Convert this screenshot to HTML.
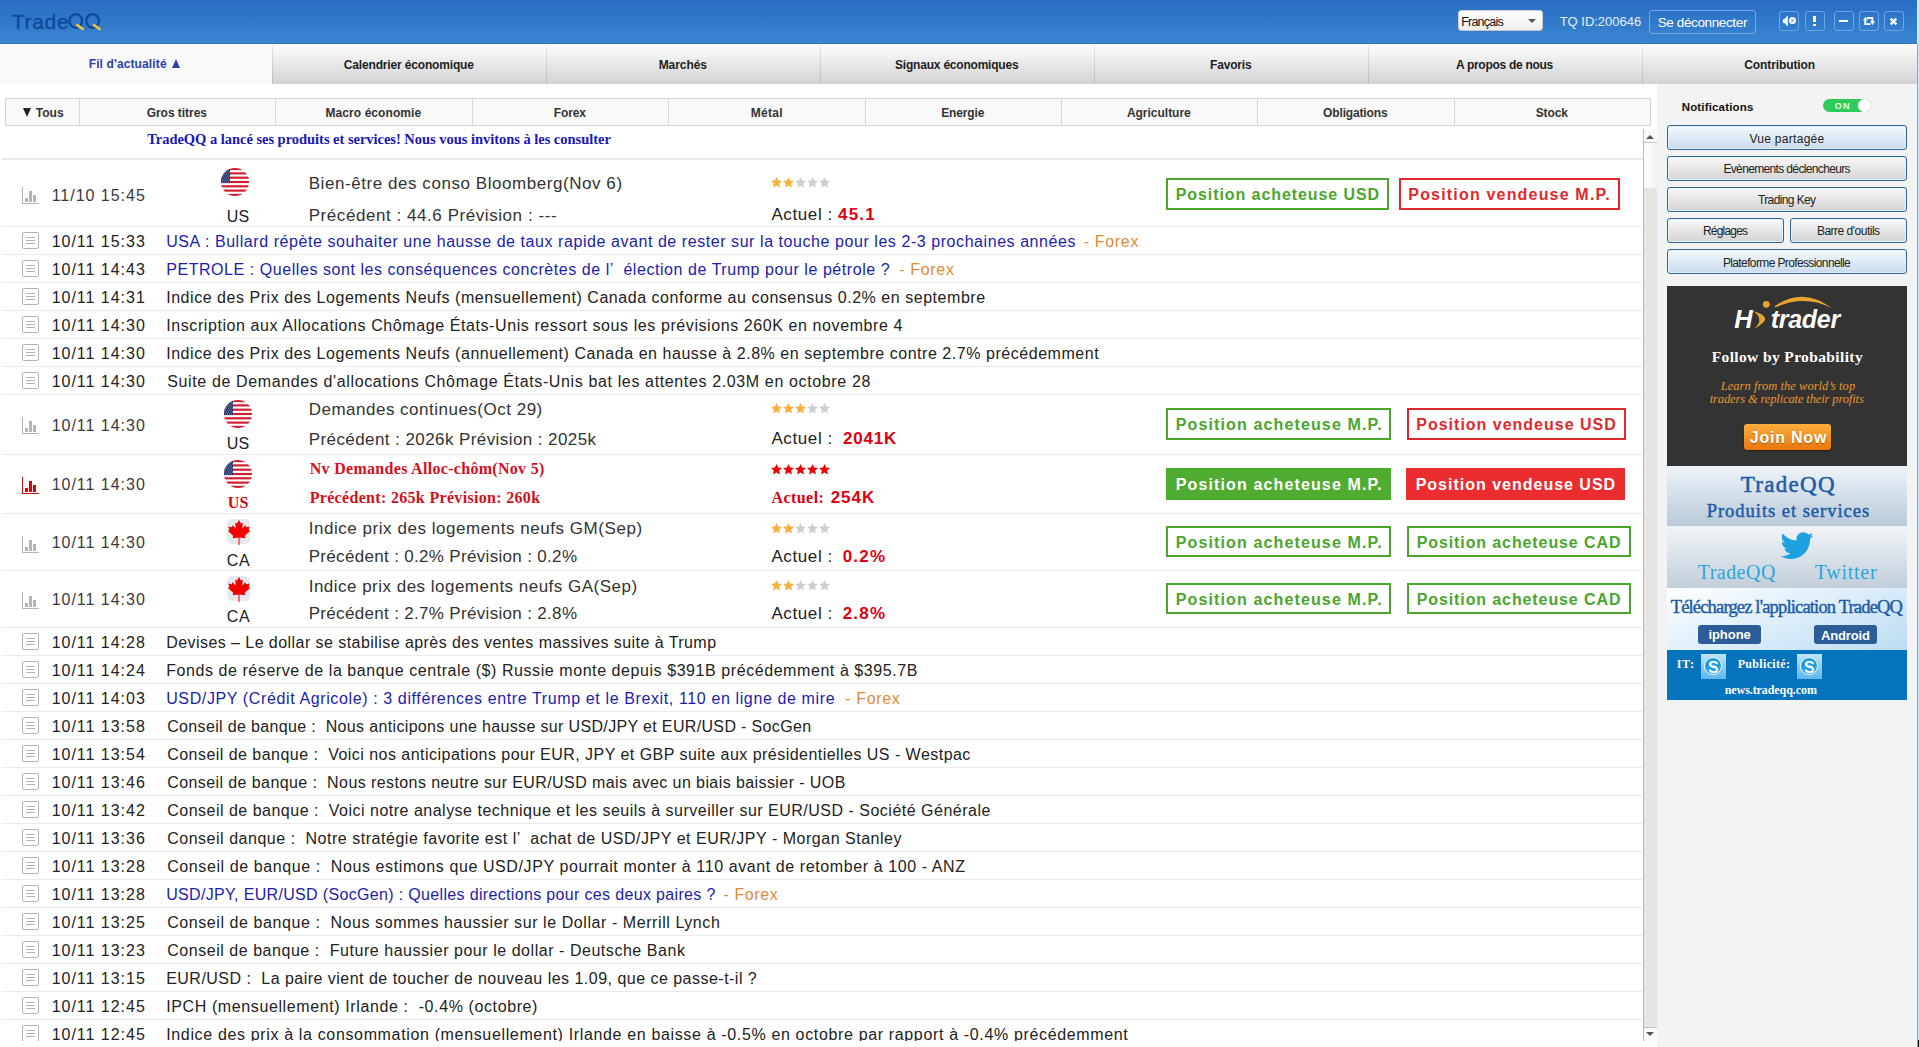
<!DOCTYPE html><html><head><meta charset="utf-8"><style>html,body{margin:0;padding:0;}body{width:1919px;height:1047px;overflow:hidden;position:relative;background:#fff;font-family:'Liberation Sans',sans-serif}</style></head><body><div style="position:absolute;left:0;top:0;width:1917px;height:44px;background:linear-gradient(#286dc3,#3a86d0);"></div>
<div style="position:absolute;left:0;top:43px;width:1917px;height:1px;background:#366eae;"></div>
<div style="position:absolute;left:1917px;top:0;width:2px;height:1047px;background:#dae6f3;"></div>
<svg style="position:absolute;left:0;top:0" width="110" height="40" viewBox="0 0 110 40">
<ellipse cx="75.8" cy="20.9" rx="6.3" ry="6.8" fill="none" stroke="#0f4a9a" stroke-width="2.4"/>
<ellipse cx="92.6" cy="20.9" rx="6.3" ry="6.8" fill="none" stroke="#0f4a9a" stroke-width="2.4"/>
<path d="M77.2 25.1 L82.8 29" stroke="#efc445" stroke-width="2.6" stroke-linecap="round"/>
<path d="M94 25.1 L99.6 29" stroke="#efc445" stroke-width="2.6" stroke-linecap="round"/>
</svg>
<div style="position:absolute;left:1458px;top:10px;width:85px;height:21px;border-radius:4px;background:linear-gradient(#ffffff,#eeedeb);box-shadow:0 0 0 1px rgba(120,120,120,.35) inset"></div>
<div style="position:absolute;left:1528px;top:19px;width:0;height:0;border-left:4px solid transparent;border-right:4px solid transparent;border-top:4px solid #555"></div>
<div style="position:absolute;left:1649px;top:10px;width:105px;height:22px;border:1px solid #74aae6;border-radius:3px;"></div>
<div style="position:absolute;left:1779px;top:11px;width:18px;height:18px;border:1px solid #6aa6ea;border-radius:3px;"></div>
<div style="position:absolute;left:1805px;top:11px;width:18px;height:18px;border:1px solid #6aa6ea;border-radius:3px;"></div>
<div style="position:absolute;left:1834px;top:11px;width:18px;height:18px;border:1px solid #6aa6ea;border-radius:3px;"></div>
<div style="position:absolute;left:1859px;top:11px;width:18px;height:18px;border:1px solid #6aa6ea;border-radius:3px;"></div>
<div style="position:absolute;left:1884px;top:11px;width:18px;height:18px;border:1px solid #6aa6ea;border-radius:3px;"></div>
<svg style="position:absolute;left:1779px;top:11px" width="20" height="20" viewBox="0 0 20 20">
<path d="M3.9 8.2 L5.3 8.2 L8.8 4.3 L8.8 15.6 L5.3 12 L3.9 12 Z" fill="#fff"/>
<circle cx="13.5" cy="9.6" r="3.5" fill="#fff"/>
<path d="M12.4 8.5 L14.6 10.7 M14.6 8.5 L12.4 10.7" stroke="#2a6cc0" stroke-width="0.9"/></svg>
<div style="position:absolute;left:1813px;top:16px;width:3px;height:6px;background:#fff"></div><div style="position:absolute;left:1813px;top:24px;width:3px;height:2px;background:#fff"></div>
<div style="position:absolute;left:1839px;top:20px;width:9px;height:2px;background:#fff"></div>
<svg style="position:absolute;left:1859px;top:11px" width="20" height="20" viewBox="0 0 20 20">
<path d="M6.4 5.7 L8.9 9.5 L7.2 9.5 L7.2 12.2 L11.6 12.2 L11.6 13.9 L5.3 13.9 L5.3 9.5 L3.9 9.5 Z" fill="#fff"/>
<path d="M8 6.1 L14.3 6.1 L14.3 10.3 L16 10.3 L13.5 13.9 L11.2 10.3 L12.4 10.3 L12.4 8 L8 8 Z" fill="#fff"/></svg>
<svg style="position:absolute;left:1884px;top:11px" width="20" height="20" viewBox="0 0 20 20">
<path d="M6.7 7.7 L12.3 13.3 M12.3 7.7 L6.7 13.3" stroke="#fff" stroke-width="2.4"/></svg>
<div style="position:absolute;left:0;top:44px;width:272px;height:40px;background:#f9f9f9"></div>
<div style="position:absolute;left:272px;top:44px;width:274px;height:40px;background:linear-gradient(#fefefe 0%,#f3f3f3 25%,#d2d2d5 100%);"></div>
<div style="position:absolute;left:272px;top:45px;width:1px;height:39px;background:linear-gradient(#e8e8e8,#bcbcc0)"></div>
<div style="position:absolute;left:546px;top:44px;width:274px;height:40px;background:linear-gradient(#fefefe 0%,#f3f3f3 25%,#d2d2d5 100%);"></div>
<div style="position:absolute;left:546px;top:45px;width:1px;height:39px;background:linear-gradient(#e8e8e8,#bcbcc0)"></div>
<div style="position:absolute;left:820px;top:44px;width:274px;height:40px;background:linear-gradient(#fefefe 0%,#f3f3f3 25%,#d2d2d5 100%);"></div>
<div style="position:absolute;left:820px;top:45px;width:1px;height:39px;background:linear-gradient(#e8e8e8,#bcbcc0)"></div>
<div style="position:absolute;left:1094px;top:44px;width:274px;height:40px;background:linear-gradient(#fefefe 0%,#f3f3f3 25%,#d2d2d5 100%);"></div>
<div style="position:absolute;left:1094px;top:45px;width:1px;height:39px;background:linear-gradient(#e8e8e8,#bcbcc0)"></div>
<div style="position:absolute;left:1368px;top:44px;width:274px;height:40px;background:linear-gradient(#fefefe 0%,#f3f3f3 25%,#d2d2d5 100%);"></div>
<div style="position:absolute;left:1368px;top:45px;width:1px;height:39px;background:linear-gradient(#e8e8e8,#bcbcc0)"></div>
<div style="position:absolute;left:1642px;top:44px;width:275px;height:40px;background:linear-gradient(#fefefe 0%,#f3f3f3 25%,#d2d2d5 100%);"></div>
<div style="position:absolute;left:1642px;top:45px;width:1px;height:39px;background:linear-gradient(#e8e8e8,#bcbcc0)"></div>
<div style="position:absolute;left:172px;top:59px;width:0;height:0;border-left:4px solid transparent;border-right:4px solid transparent;border-bottom:9px solid #2b3fb3"></div>
<div style="position:absolute;left:5px;top:98px;width:1644px;height:26px;background:#f9f9f9;border:1px solid #d4d4d4"></div>
<div style="position:absolute;left:79px;top:99px;width:1px;height:26px;background:#d8d8d8"></div>
<div style="position:absolute;left:275px;top:99px;width:1px;height:26px;background:#d8d8d8"></div>
<div style="position:absolute;left:472px;top:99px;width:1px;height:26px;background:#d8d8d8"></div>
<div style="position:absolute;left:668px;top:99px;width:1px;height:26px;background:#d8d8d8"></div>
<div style="position:absolute;left:865px;top:99px;width:1px;height:26px;background:#d8d8d8"></div>
<div style="position:absolute;left:1061px;top:99px;width:1px;height:26px;background:#d8d8d8"></div>
<div style="position:absolute;left:1257px;top:99px;width:1px;height:26px;background:#d8d8d8"></div>
<div style="position:absolute;left:1454px;top:99px;width:1px;height:26px;background:#d8d8d8"></div>
<div style="position:absolute;left:23px;top:108px;width:0;height:0;border-left:4px solid transparent;border-right:4px solid transparent;border-top:9px solid #222"></div>
<div style="position:absolute;left:1657px;top:84px;width:260px;height:963px;background:#f3f3f3"></div>
<div style="position:absolute;left:2px;top:158px;width:1641px;height:2px;background:#ebebeb"></div>
<div style="position:absolute;left:22px;top:187px;width:1px;height:17px;background:#b4b4b4"></div><div style="position:absolute;left:22px;top:203px;width:17px;height:1px;background:#b4b4b4"></div><div style="position:absolute;left:25px;top:198px;width:3px;height:4px;background:#b4b4b4"></div><div style="position:absolute;left:29px;top:191px;width:3px;height:11px;background:#b4b4b4"></div><div style="position:absolute;left:33px;top:195px;width:3px;height:7px;background:#b4b4b4"></div>
<svg style="position:absolute;left:221px;top:168px" width="28" height="28" viewBox="0 0 28 28"><defs><clipPath id="c235182"><circle cx="14" cy="14" r="14"/></clipPath></defs><g clip-path="url(#c235182)"><rect width="28" height="28" fill="#fff"/><rect x="0" y="0.00" width="28" height="2.15" fill="#cf1f2e"/><rect x="0" y="4.31" width="28" height="2.15" fill="#cf1f2e"/><rect x="0" y="8.62" width="28" height="2.15" fill="#cf1f2e"/><rect x="0" y="12.92" width="28" height="2.15" fill="#cf1f2e"/><rect x="0" y="17.23" width="28" height="2.15" fill="#cf1f2e"/><rect x="0" y="21.54" width="28" height="2.15" fill="#cf1f2e"/><rect x="0" y="25.85" width="28" height="2.15" fill="#cf1f2e"/><rect x="0" y="0" width="9" height="15.1" fill="#27386f"/><circle cx="1.5" cy="2" r="0.45" fill="#dfe4f0"/><circle cx="3.5" cy="2" r="0.45" fill="#dfe4f0"/><circle cx="5.5" cy="2" r="0.45" fill="#dfe4f0"/><circle cx="7.5" cy="2" r="0.45" fill="#dfe4f0"/><circle cx="2.5" cy="4" r="0.45" fill="#dfe4f0"/><circle cx="4.5" cy="4" r="0.45" fill="#dfe4f0"/><circle cx="6.5" cy="4" r="0.45" fill="#dfe4f0"/><circle cx="8.5" cy="4" r="0.45" fill="#dfe4f0"/><circle cx="1.5" cy="6" r="0.45" fill="#dfe4f0"/><circle cx="3.5" cy="6" r="0.45" fill="#dfe4f0"/><circle cx="5.5" cy="6" r="0.45" fill="#dfe4f0"/><circle cx="7.5" cy="6" r="0.45" fill="#dfe4f0"/><circle cx="2.5" cy="8" r="0.45" fill="#dfe4f0"/><circle cx="4.5" cy="8" r="0.45" fill="#dfe4f0"/><circle cx="6.5" cy="8" r="0.45" fill="#dfe4f0"/><circle cx="8.5" cy="8" r="0.45" fill="#dfe4f0"/><circle cx="1.5" cy="10" r="0.45" fill="#dfe4f0"/><circle cx="3.5" cy="10" r="0.45" fill="#dfe4f0"/><circle cx="5.5" cy="10" r="0.45" fill="#dfe4f0"/><circle cx="7.5" cy="10" r="0.45" fill="#dfe4f0"/><circle cx="2.5" cy="12" r="0.45" fill="#dfe4f0"/><circle cx="4.5" cy="12" r="0.45" fill="#dfe4f0"/><circle cx="6.5" cy="12" r="0.45" fill="#dfe4f0"/><circle cx="8.5" cy="12" r="0.45" fill="#dfe4f0"/><circle cx="1.5" cy="14" r="0.45" fill="#dfe4f0"/><circle cx="3.5" cy="14" r="0.45" fill="#dfe4f0"/><circle cx="5.5" cy="14" r="0.45" fill="#dfe4f0"/><circle cx="7.5" cy="14" r="0.45" fill="#dfe4f0"/></g></svg>
<svg style="position:absolute;left:771px;top:177px" width="60" height="11" viewBox="0 0 60 11"><path transform="translate(0,0)" d="M5.5 0 L7.1 3.6 L11 4 L8.1 6.6 L8.9 10.5 L5.5 8.5 L2.1 10.5 L2.9 6.6 L0 4 L3.9 3.6 Z" fill="#f7b03c"/><path transform="translate(12,0)" d="M5.5 0 L7.1 3.6 L11 4 L8.1 6.6 L8.9 10.5 L5.5 8.5 L2.1 10.5 L2.9 6.6 L0 4 L3.9 3.6 Z" fill="#f7b03c"/><path transform="translate(24,0)" d="M5.5 0 L7.1 3.6 L11 4 L8.1 6.6 L8.9 10.5 L5.5 8.5 L2.1 10.5 L2.9 6.6 L0 4 L3.9 3.6 Z" fill="#cfcfcf"/><path transform="translate(36,0)" d="M5.5 0 L7.1 3.6 L11 4 L8.1 6.6 L8.9 10.5 L5.5 8.5 L2.1 10.5 L2.9 6.6 L0 4 L3.9 3.6 Z" fill="#cfcfcf"/><path transform="translate(48,0)" d="M5.5 0 L7.1 3.6 L11 4 L8.1 6.6 L8.9 10.5 L5.5 8.5 L2.1 10.5 L2.9 6.6 L0 4 L3.9 3.6 Z" fill="#cfcfcf"/></svg>
<div style="position:absolute;left:1166px;top:178px;width:219px;height:28px;border:2px solid #4aa62e"></div>
<div style="position:absolute;left:1399px;top:178px;width:217px;height:28px;border:2px solid #e0282e"></div>
<div style="position:absolute;left:2px;top:226px;width:1641px;height:1px;background:#ebebeb"></div>
<div style="position:absolute;left:22px;top:417px;width:1px;height:17px;background:#b4b4b4"></div><div style="position:absolute;left:22px;top:433px;width:17px;height:1px;background:#b4b4b4"></div><div style="position:absolute;left:25px;top:428px;width:3px;height:4px;background:#b4b4b4"></div><div style="position:absolute;left:29px;top:421px;width:3px;height:11px;background:#b4b4b4"></div><div style="position:absolute;left:33px;top:425px;width:3px;height:7px;background:#b4b4b4"></div>
<svg style="position:absolute;left:224px;top:400px" width="28" height="28" viewBox="0 0 28 28"><defs><clipPath id="c238414"><circle cx="14" cy="14" r="14"/></clipPath></defs><g clip-path="url(#c238414)"><rect width="28" height="28" fill="#fff"/><rect x="0" y="0.00" width="28" height="2.15" fill="#cf1f2e"/><rect x="0" y="4.31" width="28" height="2.15" fill="#cf1f2e"/><rect x="0" y="8.62" width="28" height="2.15" fill="#cf1f2e"/><rect x="0" y="12.92" width="28" height="2.15" fill="#cf1f2e"/><rect x="0" y="17.23" width="28" height="2.15" fill="#cf1f2e"/><rect x="0" y="21.54" width="28" height="2.15" fill="#cf1f2e"/><rect x="0" y="25.85" width="28" height="2.15" fill="#cf1f2e"/><rect x="0" y="0" width="9" height="15.1" fill="#27386f"/><circle cx="1.5" cy="2" r="0.45" fill="#dfe4f0"/><circle cx="3.5" cy="2" r="0.45" fill="#dfe4f0"/><circle cx="5.5" cy="2" r="0.45" fill="#dfe4f0"/><circle cx="7.5" cy="2" r="0.45" fill="#dfe4f0"/><circle cx="2.5" cy="4" r="0.45" fill="#dfe4f0"/><circle cx="4.5" cy="4" r="0.45" fill="#dfe4f0"/><circle cx="6.5" cy="4" r="0.45" fill="#dfe4f0"/><circle cx="8.5" cy="4" r="0.45" fill="#dfe4f0"/><circle cx="1.5" cy="6" r="0.45" fill="#dfe4f0"/><circle cx="3.5" cy="6" r="0.45" fill="#dfe4f0"/><circle cx="5.5" cy="6" r="0.45" fill="#dfe4f0"/><circle cx="7.5" cy="6" r="0.45" fill="#dfe4f0"/><circle cx="2.5" cy="8" r="0.45" fill="#dfe4f0"/><circle cx="4.5" cy="8" r="0.45" fill="#dfe4f0"/><circle cx="6.5" cy="8" r="0.45" fill="#dfe4f0"/><circle cx="8.5" cy="8" r="0.45" fill="#dfe4f0"/><circle cx="1.5" cy="10" r="0.45" fill="#dfe4f0"/><circle cx="3.5" cy="10" r="0.45" fill="#dfe4f0"/><circle cx="5.5" cy="10" r="0.45" fill="#dfe4f0"/><circle cx="7.5" cy="10" r="0.45" fill="#dfe4f0"/><circle cx="2.5" cy="12" r="0.45" fill="#dfe4f0"/><circle cx="4.5" cy="12" r="0.45" fill="#dfe4f0"/><circle cx="6.5" cy="12" r="0.45" fill="#dfe4f0"/><circle cx="8.5" cy="12" r="0.45" fill="#dfe4f0"/><circle cx="1.5" cy="14" r="0.45" fill="#dfe4f0"/><circle cx="3.5" cy="14" r="0.45" fill="#dfe4f0"/><circle cx="5.5" cy="14" r="0.45" fill="#dfe4f0"/><circle cx="7.5" cy="14" r="0.45" fill="#dfe4f0"/></g></svg>
<svg style="position:absolute;left:771px;top:403px" width="60" height="11" viewBox="0 0 60 11"><path transform="translate(0,0)" d="M5.5 0 L7.1 3.6 L11 4 L8.1 6.6 L8.9 10.5 L5.5 8.5 L2.1 10.5 L2.9 6.6 L0 4 L3.9 3.6 Z" fill="#f7b03c"/><path transform="translate(12,0)" d="M5.5 0 L7.1 3.6 L11 4 L8.1 6.6 L8.9 10.5 L5.5 8.5 L2.1 10.5 L2.9 6.6 L0 4 L3.9 3.6 Z" fill="#f7b03c"/><path transform="translate(24,0)" d="M5.5 0 L7.1 3.6 L11 4 L8.1 6.6 L8.9 10.5 L5.5 8.5 L2.1 10.5 L2.9 6.6 L0 4 L3.9 3.6 Z" fill="#f7b03c"/><path transform="translate(36,0)" d="M5.5 0 L7.1 3.6 L11 4 L8.1 6.6 L8.9 10.5 L5.5 8.5 L2.1 10.5 L2.9 6.6 L0 4 L3.9 3.6 Z" fill="#cfcfcf"/><path transform="translate(48,0)" d="M5.5 0 L7.1 3.6 L11 4 L8.1 6.6 L8.9 10.5 L5.5 8.5 L2.1 10.5 L2.9 6.6 L0 4 L3.9 3.6 Z" fill="#cfcfcf"/></svg>
<div style="position:absolute;left:1166px;top:408px;width:221px;height:28px;border:2px solid #4aa62e"></div>
<div style="position:absolute;left:1407px;top:408px;width:215px;height:28px;border:2px solid #e0282e"></div>
<div style="position:absolute;left:2px;top:454px;width:1641px;height:1px;background:#ebebeb"></div>
<div style="position:absolute;left:22px;top:477px;width:1px;height:17px;background:#c81010"></div><div style="position:absolute;left:22px;top:493px;width:17px;height:1px;background:#c81010"></div><div style="position:absolute;left:25px;top:488px;width:3px;height:4px;background:#e00000"></div><div style="position:absolute;left:29px;top:481px;width:3px;height:11px;background:#e00000"></div><div style="position:absolute;left:33px;top:485px;width:3px;height:7px;background:#e00000"></div>
<svg style="position:absolute;left:224px;top:460px" width="28" height="28" viewBox="0 0 28 28"><defs><clipPath id="c238474"><circle cx="14" cy="14" r="14"/></clipPath></defs><g clip-path="url(#c238474)"><rect width="28" height="28" fill="#fff"/><rect x="0" y="0.00" width="28" height="2.15" fill="#cf1f2e"/><rect x="0" y="4.31" width="28" height="2.15" fill="#cf1f2e"/><rect x="0" y="8.62" width="28" height="2.15" fill="#cf1f2e"/><rect x="0" y="12.92" width="28" height="2.15" fill="#cf1f2e"/><rect x="0" y="17.23" width="28" height="2.15" fill="#cf1f2e"/><rect x="0" y="21.54" width="28" height="2.15" fill="#cf1f2e"/><rect x="0" y="25.85" width="28" height="2.15" fill="#cf1f2e"/><rect x="0" y="0" width="9" height="15.1" fill="#27386f"/><circle cx="1.5" cy="2" r="0.45" fill="#dfe4f0"/><circle cx="3.5" cy="2" r="0.45" fill="#dfe4f0"/><circle cx="5.5" cy="2" r="0.45" fill="#dfe4f0"/><circle cx="7.5" cy="2" r="0.45" fill="#dfe4f0"/><circle cx="2.5" cy="4" r="0.45" fill="#dfe4f0"/><circle cx="4.5" cy="4" r="0.45" fill="#dfe4f0"/><circle cx="6.5" cy="4" r="0.45" fill="#dfe4f0"/><circle cx="8.5" cy="4" r="0.45" fill="#dfe4f0"/><circle cx="1.5" cy="6" r="0.45" fill="#dfe4f0"/><circle cx="3.5" cy="6" r="0.45" fill="#dfe4f0"/><circle cx="5.5" cy="6" r="0.45" fill="#dfe4f0"/><circle cx="7.5" cy="6" r="0.45" fill="#dfe4f0"/><circle cx="2.5" cy="8" r="0.45" fill="#dfe4f0"/><circle cx="4.5" cy="8" r="0.45" fill="#dfe4f0"/><circle cx="6.5" cy="8" r="0.45" fill="#dfe4f0"/><circle cx="8.5" cy="8" r="0.45" fill="#dfe4f0"/><circle cx="1.5" cy="10" r="0.45" fill="#dfe4f0"/><circle cx="3.5" cy="10" r="0.45" fill="#dfe4f0"/><circle cx="5.5" cy="10" r="0.45" fill="#dfe4f0"/><circle cx="7.5" cy="10" r="0.45" fill="#dfe4f0"/><circle cx="2.5" cy="12" r="0.45" fill="#dfe4f0"/><circle cx="4.5" cy="12" r="0.45" fill="#dfe4f0"/><circle cx="6.5" cy="12" r="0.45" fill="#dfe4f0"/><circle cx="8.5" cy="12" r="0.45" fill="#dfe4f0"/><circle cx="1.5" cy="14" r="0.45" fill="#dfe4f0"/><circle cx="3.5" cy="14" r="0.45" fill="#dfe4f0"/><circle cx="5.5" cy="14" r="0.45" fill="#dfe4f0"/><circle cx="7.5" cy="14" r="0.45" fill="#dfe4f0"/></g></svg>
<svg style="position:absolute;left:771px;top:464px" width="60" height="11" viewBox="0 0 60 11"><path transform="translate(0,0)" d="M5.5 0 L7.1 3.6 L11 4 L8.1 6.6 L8.9 10.5 L5.5 8.5 L2.1 10.5 L2.9 6.6 L0 4 L3.9 3.6 Z" fill="#ee0000"/><path transform="translate(12,0)" d="M5.5 0 L7.1 3.6 L11 4 L8.1 6.6 L8.9 10.5 L5.5 8.5 L2.1 10.5 L2.9 6.6 L0 4 L3.9 3.6 Z" fill="#ee0000"/><path transform="translate(24,0)" d="M5.5 0 L7.1 3.6 L11 4 L8.1 6.6 L8.9 10.5 L5.5 8.5 L2.1 10.5 L2.9 6.6 L0 4 L3.9 3.6 Z" fill="#ee0000"/><path transform="translate(36,0)" d="M5.5 0 L7.1 3.6 L11 4 L8.1 6.6 L8.9 10.5 L5.5 8.5 L2.1 10.5 L2.9 6.6 L0 4 L3.9 3.6 Z" fill="#ee0000"/><path transform="translate(48,0)" d="M5.5 0 L7.1 3.6 L11 4 L8.1 6.6 L8.9 10.5 L5.5 8.5 L2.1 10.5 L2.9 6.6 L0 4 L3.9 3.6 Z" fill="#ee0000"/></svg>
<div style="position:absolute;left:1166px;top:468px;width:225px;height:32px;background:#4fac30"></div>
<div style="position:absolute;left:1406px;top:468px;width:219px;height:32px;background:#ec2d30"></div>
<div style="position:absolute;left:2px;top:513px;width:1641px;height:1px;background:#ebebeb"></div>
<div style="position:absolute;left:22px;top:536px;width:1px;height:17px;background:#b4b4b4"></div><div style="position:absolute;left:22px;top:552px;width:17px;height:1px;background:#b4b4b4"></div><div style="position:absolute;left:25px;top:547px;width:3px;height:4px;background:#b4b4b4"></div><div style="position:absolute;left:29px;top:540px;width:3px;height:11px;background:#b4b4b4"></div><div style="position:absolute;left:33px;top:544px;width:3px;height:7px;background:#b4b4b4"></div>
<div style="position:absolute;left:227px;top:519px;width:23px;height:25px;border-radius:5px;background:#e6e8ec"></div><svg style="position:absolute;left:227.5px;top:519.5px" width="22" height="25" viewBox="0 0 22 25"><path d="M11 0 L13 3.6 L14.8 2.8 L14.2 8.5 L17.5 5.2 L18.2 7.2 L21.6 6.6 L20.6 10 L22 11 L16.6 16 L17.4 18.3 L11.5 17.4 L11.5 25 L10.5 25 L10.5 17.4 L4.6 18.3 L5.4 16 L0 11 L1.4 10 L0.4 6.6 L3.8 7.2 L4.5 5.2 L7.8 8.5 L7.2 2.8 L9 3.6 Z" fill="#f20000"/></svg>
<svg style="position:absolute;left:771px;top:523px" width="60" height="11" viewBox="0 0 60 11"><path transform="translate(0,0)" d="M5.5 0 L7.1 3.6 L11 4 L8.1 6.6 L8.9 10.5 L5.5 8.5 L2.1 10.5 L2.9 6.6 L0 4 L3.9 3.6 Z" fill="#f7b03c"/><path transform="translate(12,0)" d="M5.5 0 L7.1 3.6 L11 4 L8.1 6.6 L8.9 10.5 L5.5 8.5 L2.1 10.5 L2.9 6.6 L0 4 L3.9 3.6 Z" fill="#f7b03c"/><path transform="translate(24,0)" d="M5.5 0 L7.1 3.6 L11 4 L8.1 6.6 L8.9 10.5 L5.5 8.5 L2.1 10.5 L2.9 6.6 L0 4 L3.9 3.6 Z" fill="#cfcfcf"/><path transform="translate(36,0)" d="M5.5 0 L7.1 3.6 L11 4 L8.1 6.6 L8.9 10.5 L5.5 8.5 L2.1 10.5 L2.9 6.6 L0 4 L3.9 3.6 Z" fill="#cfcfcf"/><path transform="translate(48,0)" d="M5.5 0 L7.1 3.6 L11 4 L8.1 6.6 L8.9 10.5 L5.5 8.5 L2.1 10.5 L2.9 6.6 L0 4 L3.9 3.6 Z" fill="#cfcfcf"/></svg>
<div style="position:absolute;left:1166px;top:526px;width:221px;height:27px;border:2px solid #4aa62e"></div>
<div style="position:absolute;left:1407px;top:526px;width:220px;height:27px;border:2px solid #4aa62e"></div>
<div style="position:absolute;left:2px;top:570px;width:1641px;height:1px;background:#ebebeb"></div>
<div style="position:absolute;left:22px;top:592px;width:1px;height:17px;background:#b4b4b4"></div><div style="position:absolute;left:22px;top:608px;width:17px;height:1px;background:#b4b4b4"></div><div style="position:absolute;left:25px;top:603px;width:3px;height:4px;background:#b4b4b4"></div><div style="position:absolute;left:29px;top:596px;width:3px;height:11px;background:#b4b4b4"></div><div style="position:absolute;left:33px;top:600px;width:3px;height:7px;background:#b4b4b4"></div>
<div style="position:absolute;left:227px;top:576px;width:23px;height:25px;border-radius:5px;background:#e6e8ec"></div><svg style="position:absolute;left:227.5px;top:576.5px" width="22" height="25" viewBox="0 0 22 25"><path d="M11 0 L13 3.6 L14.8 2.8 L14.2 8.5 L17.5 5.2 L18.2 7.2 L21.6 6.6 L20.6 10 L22 11 L16.6 16 L17.4 18.3 L11.5 17.4 L11.5 25 L10.5 25 L10.5 17.4 L4.6 18.3 L5.4 16 L0 11 L1.4 10 L0.4 6.6 L3.8 7.2 L4.5 5.2 L7.8 8.5 L7.2 2.8 L9 3.6 Z" fill="#f20000"/></svg>
<svg style="position:absolute;left:771px;top:580px" width="60" height="11" viewBox="0 0 60 11"><path transform="translate(0,0)" d="M5.5 0 L7.1 3.6 L11 4 L8.1 6.6 L8.9 10.5 L5.5 8.5 L2.1 10.5 L2.9 6.6 L0 4 L3.9 3.6 Z" fill="#f7b03c"/><path transform="translate(12,0)" d="M5.5 0 L7.1 3.6 L11 4 L8.1 6.6 L8.9 10.5 L5.5 8.5 L2.1 10.5 L2.9 6.6 L0 4 L3.9 3.6 Z" fill="#f7b03c"/><path transform="translate(24,0)" d="M5.5 0 L7.1 3.6 L11 4 L8.1 6.6 L8.9 10.5 L5.5 8.5 L2.1 10.5 L2.9 6.6 L0 4 L3.9 3.6 Z" fill="#cfcfcf"/><path transform="translate(36,0)" d="M5.5 0 L7.1 3.6 L11 4 L8.1 6.6 L8.9 10.5 L5.5 8.5 L2.1 10.5 L2.9 6.6 L0 4 L3.9 3.6 Z" fill="#cfcfcf"/><path transform="translate(48,0)" d="M5.5 0 L7.1 3.6 L11 4 L8.1 6.6 L8.9 10.5 L5.5 8.5 L2.1 10.5 L2.9 6.6 L0 4 L3.9 3.6 Z" fill="#cfcfcf"/></svg>
<div style="position:absolute;left:1166px;top:583px;width:221px;height:27px;border:2px solid #4aa62e"></div>
<div style="position:absolute;left:1407px;top:583px;width:220px;height:27px;border:2px solid #4aa62e"></div>
<div style="position:absolute;left:2px;top:627px;width:1641px;height:1px;background:#ebebeb"></div>
<div style="position:absolute;left:22px;top:232px;width:15px;height:15px;border:1px solid #b4b4b4;border-radius:2px;background:#fff"></div><div style="position:absolute;left:26px;top:237px;width:9px;height:1px;background:#b4b4b4"></div><div style="position:absolute;left:26px;top:240px;width:9px;height:1px;background:#b4b4b4"></div><div style="position:absolute;left:26px;top:243px;width:9px;height:1px;background:#b4b4b4"></div>
<div style="position:absolute;left:2px;top:254px;width:1641px;height:1px;background:#ebebeb"></div>
<div style="position:absolute;left:22px;top:260px;width:15px;height:15px;border:1px solid #b4b4b4;border-radius:2px;background:#fff"></div><div style="position:absolute;left:26px;top:265px;width:9px;height:1px;background:#b4b4b4"></div><div style="position:absolute;left:26px;top:268px;width:9px;height:1px;background:#b4b4b4"></div><div style="position:absolute;left:26px;top:271px;width:9px;height:1px;background:#b4b4b4"></div>
<div style="position:absolute;left:2px;top:282px;width:1641px;height:1px;background:#ebebeb"></div>
<div style="position:absolute;left:22px;top:288px;width:15px;height:15px;border:1px solid #b4b4b4;border-radius:2px;background:#fff"></div><div style="position:absolute;left:26px;top:293px;width:9px;height:1px;background:#b4b4b4"></div><div style="position:absolute;left:26px;top:296px;width:9px;height:1px;background:#b4b4b4"></div><div style="position:absolute;left:26px;top:299px;width:9px;height:1px;background:#b4b4b4"></div>
<div style="position:absolute;left:2px;top:310px;width:1641px;height:1px;background:#ebebeb"></div>
<div style="position:absolute;left:22px;top:316px;width:15px;height:15px;border:1px solid #b4b4b4;border-radius:2px;background:#fff"></div><div style="position:absolute;left:26px;top:321px;width:9px;height:1px;background:#b4b4b4"></div><div style="position:absolute;left:26px;top:324px;width:9px;height:1px;background:#b4b4b4"></div><div style="position:absolute;left:26px;top:327px;width:9px;height:1px;background:#b4b4b4"></div>
<div style="position:absolute;left:2px;top:338px;width:1641px;height:1px;background:#ebebeb"></div>
<div style="position:absolute;left:22px;top:344px;width:15px;height:15px;border:1px solid #b4b4b4;border-radius:2px;background:#fff"></div><div style="position:absolute;left:26px;top:349px;width:9px;height:1px;background:#b4b4b4"></div><div style="position:absolute;left:26px;top:352px;width:9px;height:1px;background:#b4b4b4"></div><div style="position:absolute;left:26px;top:355px;width:9px;height:1px;background:#b4b4b4"></div>
<div style="position:absolute;left:2px;top:366px;width:1641px;height:1px;background:#ebebeb"></div>
<div style="position:absolute;left:22px;top:372px;width:15px;height:15px;border:1px solid #b4b4b4;border-radius:2px;background:#fff"></div><div style="position:absolute;left:26px;top:377px;width:9px;height:1px;background:#b4b4b4"></div><div style="position:absolute;left:26px;top:380px;width:9px;height:1px;background:#b4b4b4"></div><div style="position:absolute;left:26px;top:383px;width:9px;height:1px;background:#b4b4b4"></div>
<div style="position:absolute;left:2px;top:394px;width:1641px;height:1px;background:#ebebeb"></div>
<div style="position:absolute;left:22px;top:633px;width:15px;height:15px;border:1px solid #b4b4b4;border-radius:2px;background:#fff"></div><div style="position:absolute;left:26px;top:638px;width:9px;height:1px;background:#b4b4b4"></div><div style="position:absolute;left:26px;top:641px;width:9px;height:1px;background:#b4b4b4"></div><div style="position:absolute;left:26px;top:644px;width:9px;height:1px;background:#b4b4b4"></div>
<div style="position:absolute;left:2px;top:655px;width:1641px;height:1px;background:#ebebeb"></div>
<div style="position:absolute;left:22px;top:661px;width:15px;height:15px;border:1px solid #b4b4b4;border-radius:2px;background:#fff"></div><div style="position:absolute;left:26px;top:666px;width:9px;height:1px;background:#b4b4b4"></div><div style="position:absolute;left:26px;top:669px;width:9px;height:1px;background:#b4b4b4"></div><div style="position:absolute;left:26px;top:672px;width:9px;height:1px;background:#b4b4b4"></div>
<div style="position:absolute;left:2px;top:683px;width:1641px;height:1px;background:#ebebeb"></div>
<div style="position:absolute;left:22px;top:689px;width:15px;height:15px;border:1px solid #b4b4b4;border-radius:2px;background:#fff"></div><div style="position:absolute;left:26px;top:694px;width:9px;height:1px;background:#b4b4b4"></div><div style="position:absolute;left:26px;top:697px;width:9px;height:1px;background:#b4b4b4"></div><div style="position:absolute;left:26px;top:700px;width:9px;height:1px;background:#b4b4b4"></div>
<div style="position:absolute;left:2px;top:711px;width:1641px;height:1px;background:#ebebeb"></div>
<div style="position:absolute;left:22px;top:717px;width:15px;height:15px;border:1px solid #b4b4b4;border-radius:2px;background:#fff"></div><div style="position:absolute;left:26px;top:722px;width:9px;height:1px;background:#b4b4b4"></div><div style="position:absolute;left:26px;top:725px;width:9px;height:1px;background:#b4b4b4"></div><div style="position:absolute;left:26px;top:728px;width:9px;height:1px;background:#b4b4b4"></div>
<div style="position:absolute;left:2px;top:739px;width:1641px;height:1px;background:#ebebeb"></div>
<div style="position:absolute;left:22px;top:745px;width:15px;height:15px;border:1px solid #b4b4b4;border-radius:2px;background:#fff"></div><div style="position:absolute;left:26px;top:750px;width:9px;height:1px;background:#b4b4b4"></div><div style="position:absolute;left:26px;top:753px;width:9px;height:1px;background:#b4b4b4"></div><div style="position:absolute;left:26px;top:756px;width:9px;height:1px;background:#b4b4b4"></div>
<div style="position:absolute;left:2px;top:767px;width:1641px;height:1px;background:#ebebeb"></div>
<div style="position:absolute;left:22px;top:773px;width:15px;height:15px;border:1px solid #b4b4b4;border-radius:2px;background:#fff"></div><div style="position:absolute;left:26px;top:778px;width:9px;height:1px;background:#b4b4b4"></div><div style="position:absolute;left:26px;top:781px;width:9px;height:1px;background:#b4b4b4"></div><div style="position:absolute;left:26px;top:784px;width:9px;height:1px;background:#b4b4b4"></div>
<div style="position:absolute;left:2px;top:795px;width:1641px;height:1px;background:#ebebeb"></div>
<div style="position:absolute;left:22px;top:801px;width:15px;height:15px;border:1px solid #b4b4b4;border-radius:2px;background:#fff"></div><div style="position:absolute;left:26px;top:806px;width:9px;height:1px;background:#b4b4b4"></div><div style="position:absolute;left:26px;top:809px;width:9px;height:1px;background:#b4b4b4"></div><div style="position:absolute;left:26px;top:812px;width:9px;height:1px;background:#b4b4b4"></div>
<div style="position:absolute;left:2px;top:823px;width:1641px;height:1px;background:#ebebeb"></div>
<div style="position:absolute;left:22px;top:829px;width:15px;height:15px;border:1px solid #b4b4b4;border-radius:2px;background:#fff"></div><div style="position:absolute;left:26px;top:834px;width:9px;height:1px;background:#b4b4b4"></div><div style="position:absolute;left:26px;top:837px;width:9px;height:1px;background:#b4b4b4"></div><div style="position:absolute;left:26px;top:840px;width:9px;height:1px;background:#b4b4b4"></div>
<div style="position:absolute;left:2px;top:851px;width:1641px;height:1px;background:#ebebeb"></div>
<div style="position:absolute;left:22px;top:857px;width:15px;height:15px;border:1px solid #b4b4b4;border-radius:2px;background:#fff"></div><div style="position:absolute;left:26px;top:862px;width:9px;height:1px;background:#b4b4b4"></div><div style="position:absolute;left:26px;top:865px;width:9px;height:1px;background:#b4b4b4"></div><div style="position:absolute;left:26px;top:868px;width:9px;height:1px;background:#b4b4b4"></div>
<div style="position:absolute;left:2px;top:879px;width:1641px;height:1px;background:#ebebeb"></div>
<div style="position:absolute;left:22px;top:885px;width:15px;height:15px;border:1px solid #b4b4b4;border-radius:2px;background:#fff"></div><div style="position:absolute;left:26px;top:890px;width:9px;height:1px;background:#b4b4b4"></div><div style="position:absolute;left:26px;top:893px;width:9px;height:1px;background:#b4b4b4"></div><div style="position:absolute;left:26px;top:896px;width:9px;height:1px;background:#b4b4b4"></div>
<div style="position:absolute;left:2px;top:907px;width:1641px;height:1px;background:#ebebeb"></div>
<div style="position:absolute;left:22px;top:913px;width:15px;height:15px;border:1px solid #b4b4b4;border-radius:2px;background:#fff"></div><div style="position:absolute;left:26px;top:918px;width:9px;height:1px;background:#b4b4b4"></div><div style="position:absolute;left:26px;top:921px;width:9px;height:1px;background:#b4b4b4"></div><div style="position:absolute;left:26px;top:924px;width:9px;height:1px;background:#b4b4b4"></div>
<div style="position:absolute;left:2px;top:935px;width:1641px;height:1px;background:#ebebeb"></div>
<div style="position:absolute;left:22px;top:941px;width:15px;height:15px;border:1px solid #b4b4b4;border-radius:2px;background:#fff"></div><div style="position:absolute;left:26px;top:946px;width:9px;height:1px;background:#b4b4b4"></div><div style="position:absolute;left:26px;top:949px;width:9px;height:1px;background:#b4b4b4"></div><div style="position:absolute;left:26px;top:952px;width:9px;height:1px;background:#b4b4b4"></div>
<div style="position:absolute;left:2px;top:963px;width:1641px;height:1px;background:#ebebeb"></div>
<div style="position:absolute;left:22px;top:969px;width:15px;height:15px;border:1px solid #b4b4b4;border-radius:2px;background:#fff"></div><div style="position:absolute;left:26px;top:974px;width:9px;height:1px;background:#b4b4b4"></div><div style="position:absolute;left:26px;top:977px;width:9px;height:1px;background:#b4b4b4"></div><div style="position:absolute;left:26px;top:980px;width:9px;height:1px;background:#b4b4b4"></div>
<div style="position:absolute;left:2px;top:991px;width:1641px;height:1px;background:#ebebeb"></div>
<div style="position:absolute;left:22px;top:997px;width:15px;height:15px;border:1px solid #b4b4b4;border-radius:2px;background:#fff"></div><div style="position:absolute;left:26px;top:1002px;width:9px;height:1px;background:#b4b4b4"></div><div style="position:absolute;left:26px;top:1005px;width:9px;height:1px;background:#b4b4b4"></div><div style="position:absolute;left:26px;top:1008px;width:9px;height:1px;background:#b4b4b4"></div>
<div style="position:absolute;left:2px;top:1019px;width:1641px;height:1px;background:#ebebeb"></div>
<div style="position:absolute;left:22px;top:1025px;width:15px;height:15px;border:1px solid #b4b4b4;border-radius:2px;background:#fff"></div><div style="position:absolute;left:26px;top:1030px;width:9px;height:1px;background:#b4b4b4"></div><div style="position:absolute;left:26px;top:1033px;width:9px;height:1px;background:#b4b4b4"></div><div style="position:absolute;left:26px;top:1036px;width:9px;height:1px;background:#b4b4b4"></div>
<div style="position:absolute;left:1643px;top:129px;width:1px;height:912px;background:#b9b9b9"></div>
<div style="position:absolute;left:1644px;top:129px;width:13px;height:912px;background:#e7e4e2"></div>
<div style="position:absolute;left:1644px;top:129px;width:13px;height:13px;background:#fafafa"></div>
<div style="position:absolute;left:1644px;top:142px;width:13px;height:1px;background:#c4c4c4"></div>
<div style="position:absolute;left:1644px;top:143px;width:13px;height:45px;background:linear-gradient(90deg,#ffffff,#f2f2f2)"></div>
<div style="position:absolute;left:1646px;top:135px;width:0;height:0;border-left:4px solid transparent;border-right:4px solid transparent;border-bottom:4px solid #555"></div>
<div style="position:absolute;left:1644px;top:1027px;width:13px;height:1px;background:#bdbdbd"></div>
<div style="position:absolute;left:1644px;top:1028px;width:13px;height:13px;background:#fafafa"></div>
<div style="position:absolute;left:1646px;top:1032px;width:0;height:0;border-left:4px solid transparent;border-right:4px solid transparent;border-top:4px solid #555"></div>
<div style="position:absolute;left:1823px;top:99px;width:48px;height:13px;border-radius:7px;background:#2ecb5c"></div>
<div style="position:absolute;left:1858px;top:99px;width:13px;height:13px;border-radius:50%;background:#fff;box-shadow:0 0 1px #bbb"></div>
<div style="position:absolute;left:1667px;top:125px;width:238px;height:23px;border:1px solid #32639a;border-radius:3px;background:linear-gradient(#f4f8fc,#c9dcee);box-shadow:inset 0 0 0 1px rgba(225,245,255,.9)"></div>
<div style="position:absolute;left:1667px;top:156px;width:238px;height:23px;border:1px solid #32639a;border-radius:3px;background:linear-gradient(#f8f8f8,#d4d4d4);box-shadow:inset 0 0 0 1px rgba(225,245,255,.9)"></div>
<div style="position:absolute;left:1667px;top:187px;width:238px;height:23px;border:1px solid #32639a;border-radius:3px;background:linear-gradient(#f8f8f8,#d4d4d4);box-shadow:inset 0 0 0 1px rgba(225,245,255,.9)"></div>
<div style="position:absolute;left:1667px;top:218px;width:115px;height:23px;border:1px solid #32639a;border-radius:3px;background:linear-gradient(#f8f8f8,#d4d4d4);box-shadow:inset 0 0 0 1px rgba(225,245,255,.9)"></div>
<div style="position:absolute;left:1790px;top:218px;width:115px;height:23px;border:1px solid #32639a;border-radius:3px;background:linear-gradient(#f8f8f8,#d4d4d4);box-shadow:inset 0 0 0 1px rgba(225,245,255,.9)"></div>
<div style="position:absolute;left:1667px;top:249px;width:238px;height:23px;border:1px solid #32639a;border-radius:3px;background:linear-gradient(#f4f8fc,#c9dcee);box-shadow:inset 0 0 0 1px rgba(225,245,255,.9)"></div>
<div style="position:absolute;left:1667px;top:286px;width:240px;height:180px;background:#333333"></div>
<svg style="position:absolute;left:1730px;top:292px" width="120" height="40" viewBox="0 0 120 40">
<path d="M44.5 14.3 Q73 -5.9 102 16.3 Q75 2.2 45.5 15.3 Z" fill="#e6a42e"/>
<circle cx="36.3" cy="12.3" r="3.4" fill="#e9a62f"/>
<path d="M23 19 Q46.5 25.5 24.5 36.4 Q35 27 23 19 Z" fill="#e3a530"/>
</svg>
<div style="position:absolute;left:1744px;top:424px;width:87px;height:26px;border-radius:3px;background:linear-gradient(#fcae3c,#e8760e);box-shadow:0 1px 2px rgba(0,0,0,.4)"></div>
<div style="position:absolute;left:1667px;top:466px;width:240px;height:60px;background:linear-gradient(#eef3f8,#b9cad9)"></div>
<div style="position:absolute;left:1667px;top:526px;width:240px;height:62px;background:linear-gradient(#f2f5f8,#c2ceda)"></div>
<svg style="position:absolute;left:1779px;top:531px" width="36" height="32" viewBox="0 0 24 20">
<path d="M23 2.4c-.8.4-1.7.6-2.6.7.9-.6 1.6-1.4 2-2.5-.9.5-1.8.9-2.9 1.1C18.7.8 17.5.2 16.2.2c-2.5 0-4.5 2-4.5 4.5 0 .4 0 .7.1 1C8 5.5 4.7 3.7 2.5 1 2.1 1.7 1.9 2.4 1.9 3.3c0 1.6.8 2.9 2 3.8-.7 0-1.4-.2-2-.6v.1c0 2.2 1.6 4 3.6 4.4-.4.1-.8.2-1.2.2-.3 0-.6 0-.8-.1.6 1.8 2.2 3.1 4.2 3.1-1.5 1.2-3.5 1.9-5.6 1.9-.4 0-.7 0-1.1-.1 2 1.3 4.4 2 6.9 2 8.3 0 12.8-6.9 12.8-12.8v-.6c.9-.6 1.6-1.4 2.3-2.2z" fill="#1da1e2"/></svg>
<div style="position:absolute;left:1667px;top:588px;width:240px;height:62px;background:linear-gradient(160deg,#ffffff 0%,#e4f1fb 40%,#bcdcf3 100%)"></div>
<div style="position:absolute;left:1698px;top:625px;width:63px;height:19px;border-radius:3px;background:#2b5d99"></div>
<div style="position:absolute;left:1814px;top:625px;width:63px;height:19px;border-radius:3px;background:#2b5d99"></div>
<div style="position:absolute;left:1667px;top:650px;width:240px;height:50px;background:#0673bd"></div>
<div style="position:absolute;left:1701px;top:654px;width:25px;height:25px;background:linear-gradient(#bfe4f8,#5eb8ea)"></div><div style="position:absolute;left:1704px;top:657px;width:16px;height:16px;border-radius:50%;background:#1f9ee2;border:1.5px solid #f4fbff"></div>
<div style="position:absolute;left:1797px;top:654px;width:25px;height:25px;background:linear-gradient(#bfe4f8,#5eb8ea)"></div><div style="position:absolute;left:1800px;top:657px;width:16px;height:16px;border-radius:50%;background:#1f9ee2;border:1.5px solid #f4fbff"></div>
<div style="position:absolute;left:11.70px;top:9.50px;font-family:'Liberation Sans',sans-serif;font-size:21px;font-weight:normal;font-style:normal;color:#0f4a9a;white-space:pre;letter-spacing:0.7px;line-height:normal;-webkit-text-stroke:0.45px #0f4a9a">Trade</div>
<div style="position:absolute;left:1461.20px;top:15.00px;font-family:'Liberation Sans',sans-serif;font-size:12.5px;font-weight:normal;font-style:normal;color:#111;white-space:pre;letter-spacing:-0.783px;line-height:normal;">Français</div>
<div style="position:absolute;left:1559.70px;top:14.00px;font-family:'Liberation Sans',sans-serif;font-size:13px;font-weight:normal;font-style:normal;color:#e4f0fc;white-space:pre;letter-spacing:-0.021px;line-height:normal;">TQ ID:200646</div>
<div style="position:absolute;left:1657.70px;top:15.00px;font-family:'Liberation Sans',sans-serif;font-size:13.5px;font-weight:normal;font-style:normal;color:#ffffff;white-space:pre;letter-spacing:-0.375px;line-height:normal;">Se déconnecter</div>
<div style="position:absolute;left:343.75px;top:58.00px;font-family:'Liberation Sans',sans-serif;font-size:12px;font-weight:bold;font-style:normal;color:#1e1e1e;white-space:pre;letter-spacing:-0.16px;line-height:normal;">Calendrier économique</div>
<div style="position:absolute;left:658.65px;top:58.00px;font-family:'Liberation Sans',sans-serif;font-size:12px;font-weight:bold;font-style:normal;color:#1e1e1e;white-space:pre;letter-spacing:-0.053px;line-height:normal;">Marchés</div>
<div style="position:absolute;left:895.05px;top:58.00px;font-family:'Liberation Sans',sans-serif;font-size:12px;font-weight:bold;font-style:normal;color:#1e1e1e;white-space:pre;letter-spacing:-0.21px;line-height:normal;">Signaux économiques</div>
<div style="position:absolute;left:1210.10px;top:58.00px;font-family:'Liberation Sans',sans-serif;font-size:12px;font-weight:bold;font-style:normal;color:#1e1e1e;white-space:pre;letter-spacing:-0.202px;line-height:normal;">Favoris</div>
<div style="position:absolute;left:1455.95px;top:58.00px;font-family:'Liberation Sans',sans-serif;font-size:12px;font-weight:bold;font-style:normal;color:#1e1e1e;white-space:pre;letter-spacing:-0.282px;line-height:normal;">A propos de nous</div>
<div style="position:absolute;left:1744.25px;top:58.00px;font-family:'Liberation Sans',sans-serif;font-size:12px;font-weight:bold;font-style:normal;color:#1e1e1e;white-space:pre;letter-spacing:-0.104px;line-height:normal;">Contribution</div>
<div style="position:absolute;left:88.70px;top:57.00px;font-family:'Liberation Sans',sans-serif;font-size:12px;font-weight:bold;font-style:normal;color:#2b3fb3;white-space:pre;letter-spacing:0.119px;line-height:normal;">Fil d&#x27;actualité</div>
<div style="position:absolute;left:146.65px;top:106.00px;font-family:'Liberation Sans',sans-serif;font-size:12px;font-weight:bold;font-style:normal;color:#333;white-space:pre;letter-spacing:-0.031px;line-height:normal;">Gros titres</div>
<div style="position:absolute;left:325.55px;top:106.00px;font-family:'Liberation Sans',sans-serif;font-size:12px;font-weight:bold;font-style:normal;color:#333;white-space:pre;letter-spacing:0.068px;line-height:normal;">Macro économie</div>
<div style="position:absolute;left:553.65px;top:106.00px;font-family:'Liberation Sans',sans-serif;font-size:12px;font-weight:bold;font-style:normal;color:#333;white-space:pre;letter-spacing:-0.076px;line-height:normal;">Forex</div>
<div style="position:absolute;left:750.65px;top:106.00px;font-family:'Liberation Sans',sans-serif;font-size:12px;font-weight:bold;font-style:normal;color:#333;white-space:pre;letter-spacing:0.34px;line-height:normal;">Métal</div>
<div style="position:absolute;left:941.20px;top:106.00px;font-family:'Liberation Sans',sans-serif;font-size:12px;font-weight:bold;font-style:normal;color:#333;white-space:pre;letter-spacing:-0.124px;line-height:normal;">Energie</div>
<div style="position:absolute;left:1126.90px;top:106.00px;font-family:'Liberation Sans',sans-serif;font-size:12px;font-weight:bold;font-style:normal;color:#333;white-space:pre;letter-spacing:-0.013px;line-height:normal;">Agriculture</div>
<div style="position:absolute;left:1323.10px;top:106.00px;font-family:'Liberation Sans',sans-serif;font-size:12px;font-weight:bold;font-style:normal;color:#333;white-space:pre;letter-spacing:-0.153px;line-height:normal;">Obligations</div>
<div style="position:absolute;left:1535.70px;top:106.00px;font-family:'Liberation Sans',sans-serif;font-size:12px;font-weight:bold;font-style:normal;color:#333;white-space:pre;letter-spacing:-0.101px;line-height:normal;">Stock</div>
<div style="position:absolute;left:35.70px;top:106.00px;font-family:'Liberation Sans',sans-serif;font-size:12px;font-weight:bold;font-style:normal;color:#333;white-space:pre;letter-spacing:0.033px;line-height:normal;">Tous</div>
<div style="position:absolute;left:147.20px;top:131.00px;font-family:'Liberation Serif',serif;font-size:14.5px;font-weight:bold;font-style:normal;color:#1818b8;white-space:pre;letter-spacing:-0.03px;line-height:normal;">TradeQQ a lancé ses produits et services! Nous vous invitons à les consulter</div>
<div style="position:absolute;left:51.70px;top:187.00px;font-family:'Liberation Sans',sans-serif;font-size:16px;font-weight:normal;font-style:normal;color:#3a3a3a;white-space:pre;letter-spacing:0.976px;line-height:normal;">11/10 15:45</div>
<div style="position:absolute;left:226.70px;top:207.70px;font-family:'Liberation Sans',sans-serif;font-size:16px;font-weight:normal;font-style:normal;color:#222;white-space:pre;letter-spacing:0.145px;line-height:normal;">US</div>
<div style="position:absolute;left:308.70px;top:174.00px;font-family:'Liberation Sans',sans-serif;font-size:17px;font-weight:normal;font-style:normal;color:#333;white-space:pre;letter-spacing:0.557px;line-height:normal;">Bien-être des conso Bloomberg(Nov 6)</div>
<div style="position:absolute;left:308.70px;top:206.00px;font-family:'Liberation Sans',sans-serif;font-size:17px;font-weight:normal;font-style:normal;color:#333;white-space:pre;letter-spacing:0.559px;line-height:normal;">Précédent : 44.6 Prévision : ---</div>
<div style="position:absolute;left:771.40px;top:205.00px;font-family:'Liberation Sans',sans-serif;font-size:17px;font-weight:normal;font-style:normal;color:#222;white-space:pre;letter-spacing:0.604px;line-height:normal;">Actuel :</div>
<div style="position:absolute;left:838.00px;top:205.00px;font-family:'Liberation Sans',sans-serif;font-size:17px;font-weight:bold;font-style:normal;color:#e00010;white-space:pre;letter-spacing:1.189px;line-height:normal;">45.1</div>
<div style="position:absolute;left:1175.70px;top:186.30px;font-family:'Liberation Sans',sans-serif;font-size:16px;font-weight:bold;font-style:normal;color:#4aa62e;white-space:pre;letter-spacing:0.924px;line-height:normal;">Position acheteuse USD</div>
<div style="position:absolute;left:1408.30px;top:186.30px;font-family:'Liberation Sans',sans-serif;font-size:16px;font-weight:bold;font-style:normal;color:#e0282e;white-space:pre;letter-spacing:1.181px;line-height:normal;">Position vendeuse M.P.</div>
<div style="position:absolute;left:51.70px;top:417.00px;font-family:'Liberation Sans',sans-serif;font-size:16px;font-weight:normal;font-style:normal;color:#3a3a3a;white-space:pre;letter-spacing:0.976px;line-height:normal;">10/11 14:30</div>
<div style="position:absolute;left:226.70px;top:435.30px;font-family:'Liberation Sans',sans-serif;font-size:16px;font-weight:normal;font-style:normal;color:#222;white-space:pre;letter-spacing:0.145px;line-height:normal;">US</div>
<div style="position:absolute;left:308.70px;top:400.00px;font-family:'Liberation Sans',sans-serif;font-size:17px;font-weight:normal;font-style:normal;color:#333;white-space:pre;letter-spacing:0.498px;line-height:normal;">Demandes continues(Oct 29)</div>
<div style="position:absolute;left:308.70px;top:430.00px;font-family:'Liberation Sans',sans-serif;font-size:17px;font-weight:normal;font-style:normal;color:#333;white-space:pre;letter-spacing:0.42px;line-height:normal;">Précédent : 2026k Prévision : 2025k</div>
<div style="position:absolute;left:771.40px;top:429.00px;font-family:'Liberation Sans',sans-serif;font-size:17px;font-weight:normal;font-style:normal;color:#222;white-space:pre;letter-spacing:0.604px;line-height:normal;">Actuel :</div>
<div style="position:absolute;left:843.00px;top:429.00px;font-family:'Liberation Sans',sans-serif;font-size:17px;font-weight:bold;font-style:normal;color:#e00010;white-space:pre;letter-spacing:0.77px;line-height:normal;">2041K</div>
<div style="position:absolute;left:1175.70px;top:416.30px;font-family:'Liberation Sans',sans-serif;font-size:16px;font-weight:bold;font-style:normal;color:#4aa62e;white-space:pre;letter-spacing:1.134px;line-height:normal;">Position acheteuse M.P.</div>
<div style="position:absolute;left:1416.30px;top:416.30px;font-family:'Liberation Sans',sans-serif;font-size:16px;font-weight:bold;font-style:normal;color:#e0282e;white-space:pre;letter-spacing:0.993px;line-height:normal;">Position vendeuse USD</div>
<div style="position:absolute;left:51.70px;top:476.00px;font-family:'Liberation Sans',sans-serif;font-size:16px;font-weight:normal;font-style:normal;color:#3a3a3a;white-space:pre;letter-spacing:0.976px;line-height:normal;">10/11 14:30</div>
<div style="position:absolute;left:227.70px;top:493.50px;font-family:'Liberation Serif',serif;font-size:16px;font-weight:bold;font-style:normal;color:#e00010;white-space:pre;letter-spacing:0.145px;line-height:normal;">US</div>
<div style="position:absolute;left:309.70px;top:460.30px;font-family:'Liberation Serif',serif;font-size:16px;font-weight:bold;font-style:normal;color:#d4101c;white-space:pre;letter-spacing:0.302px;line-height:normal;">Nv Demandes Alloc-chôm(Nov 5)</div>
<div style="position:absolute;left:309.70px;top:488.70px;font-family:'Liberation Serif',serif;font-size:16px;font-weight:bold;font-style:normal;color:#d4101c;white-space:pre;letter-spacing:0.318px;line-height:normal;">Précédent: 265k Prévision: 260k</div>
<div style="position:absolute;left:771.40px;top:489.30px;font-family:'Liberation Serif',serif;font-size:16px;font-weight:bold;font-style:normal;color:#e00010;white-space:pre;letter-spacing:0.462px;line-height:normal;">Actuel:</div>
<div style="position:absolute;left:830.70px;top:488.30px;font-family:'Liberation Sans',sans-serif;font-size:17px;font-weight:bold;font-style:normal;color:#e00010;white-space:pre;letter-spacing:0.945px;line-height:normal;">254K</div>
<div style="position:absolute;left:1175.70px;top:476.30px;font-family:'Liberation Sans',sans-serif;font-size:16px;font-weight:bold;font-style:normal;color:#fff;white-space:pre;letter-spacing:1.134px;line-height:normal;">Position acheteuse M.P.</div>
<div style="position:absolute;left:1415.70px;top:476.30px;font-family:'Liberation Sans',sans-serif;font-size:16px;font-weight:bold;font-style:normal;color:#fff;white-space:pre;letter-spacing:0.993px;line-height:normal;">Position vendeuse USD</div>
<div style="position:absolute;left:51.70px;top:533.70px;font-family:'Liberation Sans',sans-serif;font-size:16px;font-weight:normal;font-style:normal;color:#3a3a3a;white-space:pre;letter-spacing:0.976px;line-height:normal;">10/11 14:30</div>
<div style="position:absolute;left:226.70px;top:551.50px;font-family:'Liberation Sans',sans-serif;font-size:16px;font-weight:normal;font-style:normal;color:#222;white-space:pre;letter-spacing:0.645px;line-height:normal;">CA</div>
<div style="position:absolute;left:308.70px;top:519.30px;font-family:'Liberation Sans',sans-serif;font-size:17px;font-weight:normal;font-style:normal;color:#333;white-space:pre;letter-spacing:0.542px;line-height:normal;">Indice prix des logements neufs GM(Sep)</div>
<div style="position:absolute;left:308.70px;top:547.30px;font-family:'Liberation Sans',sans-serif;font-size:17px;font-weight:normal;font-style:normal;color:#333;white-space:pre;letter-spacing:0.323px;line-height:normal;">Précédent : 0.2% Prévision : 0.2%</div>
<div style="position:absolute;left:771.40px;top:546.70px;font-family:'Liberation Sans',sans-serif;font-size:17px;font-weight:normal;font-style:normal;color:#222;white-space:pre;letter-spacing:0.604px;line-height:normal;">Actuel :</div>
<div style="position:absolute;left:842.70px;top:546.70px;font-family:'Liberation Sans',sans-serif;font-size:17px;font-weight:bold;font-style:normal;color:#e00010;white-space:pre;letter-spacing:1.189px;line-height:normal;">0.2%</div>
<div style="position:absolute;left:1175.70px;top:534.30px;font-family:'Liberation Sans',sans-serif;font-size:16px;font-weight:bold;font-style:normal;color:#4aa62e;white-space:pre;letter-spacing:1.134px;line-height:normal;">Position acheteuse M.P.</div>
<div style="position:absolute;left:1416.70px;top:534.30px;font-family:'Liberation Sans',sans-serif;font-size:16px;font-weight:bold;font-style:normal;color:#4aa62e;white-space:pre;letter-spacing:0.896px;line-height:normal;">Position acheteuse CAD</div>
<div style="position:absolute;left:51.70px;top:591.00px;font-family:'Liberation Sans',sans-serif;font-size:16px;font-weight:normal;font-style:normal;color:#3a3a3a;white-space:pre;letter-spacing:0.976px;line-height:normal;">10/11 14:30</div>
<div style="position:absolute;left:226.70px;top:608.00px;font-family:'Liberation Sans',sans-serif;font-size:16px;font-weight:normal;font-style:normal;color:#222;white-space:pre;letter-spacing:0.645px;line-height:normal;">CA</div>
<div style="position:absolute;left:308.70px;top:576.70px;font-family:'Liberation Sans',sans-serif;font-size:17px;font-weight:normal;font-style:normal;color:#333;white-space:pre;letter-spacing:0.485px;line-height:normal;">Indice prix des logements neufs GA(Sep)</div>
<div style="position:absolute;left:308.70px;top:604.30px;font-family:'Liberation Sans',sans-serif;font-size:17px;font-weight:normal;font-style:normal;color:#333;white-space:pre;letter-spacing:0.323px;line-height:normal;">Précédent : 2.7% Prévision : 2.8%</div>
<div style="position:absolute;left:771.40px;top:603.70px;font-family:'Liberation Sans',sans-serif;font-size:17px;font-weight:normal;font-style:normal;color:#222;white-space:pre;letter-spacing:0.604px;line-height:normal;">Actuel :</div>
<div style="position:absolute;left:842.70px;top:603.70px;font-family:'Liberation Sans',sans-serif;font-size:17px;font-weight:bold;font-style:normal;color:#e00010;white-space:pre;letter-spacing:1.189px;line-height:normal;">2.8%</div>
<div style="position:absolute;left:1175.70px;top:591.30px;font-family:'Liberation Sans',sans-serif;font-size:16px;font-weight:bold;font-style:normal;color:#4aa62e;white-space:pre;letter-spacing:1.134px;line-height:normal;">Position acheteuse M.P.</div>
<div style="position:absolute;left:1416.70px;top:591.30px;font-family:'Liberation Sans',sans-serif;font-size:16px;font-weight:bold;font-style:normal;color:#4aa62e;white-space:pre;letter-spacing:0.896px;line-height:normal;">Position acheteuse CAD</div>
<div style="position:absolute;left:51.70px;top:233.00px;font-family:'Liberation Sans',sans-serif;font-size:16px;font-weight:normal;font-style:normal;color:#222;white-space:pre;letter-spacing:0.976px;line-height:normal;">10/11 15:33</div>
<div style="position:absolute;left:166.20px;top:233.00px;font-family:'Liberation Sans',sans-serif;font-size:16px;font-weight:normal;font-style:normal;color:#201dae;white-space:pre;letter-spacing:0.562px;line-height:normal;">USA : Bullard répète souhaiter une hausse de taux rapide avant de rester sur la touche pour les 2-3 prochaines années</div>
<div style="position:absolute;left:1083.70px;top:233.00px;font-family:'Liberation Sans',sans-serif;font-size:16px;font-weight:normal;font-style:normal;color:#e08b3a;white-space:pre;letter-spacing:0.671px;line-height:normal;">- Forex</div>
<div style="position:absolute;left:51.70px;top:261.00px;font-family:'Liberation Sans',sans-serif;font-size:16px;font-weight:normal;font-style:normal;color:#222;white-space:pre;letter-spacing:0.976px;line-height:normal;">10/11 14:43</div>
<div style="position:absolute;left:166.20px;top:261.00px;font-family:'Liberation Sans',sans-serif;font-size:16px;font-weight:normal;font-style:normal;color:#201dae;white-space:pre;letter-spacing:0.558px;line-height:normal;">PETROLE : Quelles sont les conséquences concrètes de l’  élection de Trump pour le pétrole ?</div>
<div style="position:absolute;left:899.20px;top:261.00px;font-family:'Liberation Sans',sans-serif;font-size:16px;font-weight:normal;font-style:normal;color:#e08b3a;white-space:pre;letter-spacing:0.671px;line-height:normal;">- Forex</div>
<div style="position:absolute;left:51.70px;top:289.00px;font-family:'Liberation Sans',sans-serif;font-size:16px;font-weight:normal;font-style:normal;color:#222;white-space:pre;letter-spacing:0.976px;line-height:normal;">10/11 14:31</div>
<div style="position:absolute;left:166.20px;top:289.00px;font-family:'Liberation Sans',sans-serif;font-size:16px;font-weight:normal;font-style:normal;color:#222;white-space:pre;letter-spacing:0.539px;line-height:normal;">Indice des Prix des Logements Neufs (mensuellement) Canada conforme au consensus 0.2% en septembre</div>
<div style="position:absolute;left:51.70px;top:317.00px;font-family:'Liberation Sans',sans-serif;font-size:16px;font-weight:normal;font-style:normal;color:#222;white-space:pre;letter-spacing:0.976px;line-height:normal;">10/11 14:30</div>
<div style="position:absolute;left:166.20px;top:317.00px;font-family:'Liberation Sans',sans-serif;font-size:16px;font-weight:normal;font-style:normal;color:#222;white-space:pre;letter-spacing:0.588px;line-height:normal;">Inscription aux Allocations Chômage États-Unis ressort sous les prévisions 260K en novembre 4</div>
<div style="position:absolute;left:51.70px;top:345.00px;font-family:'Liberation Sans',sans-serif;font-size:16px;font-weight:normal;font-style:normal;color:#222;white-space:pre;letter-spacing:0.976px;line-height:normal;">10/11 14:30</div>
<div style="position:absolute;left:166.20px;top:345.00px;font-family:'Liberation Sans',sans-serif;font-size:16px;font-weight:normal;font-style:normal;color:#222;white-space:pre;letter-spacing:0.54px;line-height:normal;">Indice des Prix des Logements Neufs (annuellement) Canada en hausse à 2.8% en septembre contre 2.7% précédemment</div>
<div style="position:absolute;left:51.70px;top:373.00px;font-family:'Liberation Sans',sans-serif;font-size:16px;font-weight:normal;font-style:normal;color:#222;white-space:pre;letter-spacing:0.976px;line-height:normal;">10/11 14:30</div>
<div style="position:absolute;left:167.20px;top:373.00px;font-family:'Liberation Sans',sans-serif;font-size:16px;font-weight:normal;font-style:normal;color:#222;white-space:pre;letter-spacing:0.632px;line-height:normal;">Suite de Demandes d&#x27;allocations Chômage États-Unis bat les attentes 2.03M en octobre 28</div>
<div style="position:absolute;left:51.70px;top:634.00px;font-family:'Liberation Sans',sans-serif;font-size:16px;font-weight:normal;font-style:normal;color:#222;white-space:pre;letter-spacing:0.976px;line-height:normal;">10/11 14:28</div>
<div style="position:absolute;left:166.20px;top:634.00px;font-family:'Liberation Sans',sans-serif;font-size:16px;font-weight:normal;font-style:normal;color:#222;white-space:pre;letter-spacing:0.442px;line-height:normal;">Devises – Le dollar se stabilise après des ventes massives suite à Trump</div>
<div style="position:absolute;left:51.70px;top:662.00px;font-family:'Liberation Sans',sans-serif;font-size:16px;font-weight:normal;font-style:normal;color:#222;white-space:pre;letter-spacing:0.976px;line-height:normal;">10/11 14:24</div>
<div style="position:absolute;left:166.20px;top:662.00px;font-family:'Liberation Sans',sans-serif;font-size:16px;font-weight:normal;font-style:normal;color:#222;white-space:pre;letter-spacing:0.569px;line-height:normal;">Fonds de réserve de la banque centrale ($) Russie monte depuis $391B précédemment à $395.7B</div>
<div style="position:absolute;left:51.70px;top:690.00px;font-family:'Liberation Sans',sans-serif;font-size:16px;font-weight:normal;font-style:normal;color:#222;white-space:pre;letter-spacing:0.976px;line-height:normal;">10/11 14:03</div>
<div style="position:absolute;left:166.20px;top:690.00px;font-family:'Liberation Sans',sans-serif;font-size:16px;font-weight:normal;font-style:normal;color:#201dae;white-space:pre;letter-spacing:0.619px;line-height:normal;">USD/JPY (Crédit Agricole) : 3 différences entre Trump et le Brexit, 110 en ligne de mire</div>
<div style="position:absolute;left:845.20px;top:690.00px;font-family:'Liberation Sans',sans-serif;font-size:16px;font-weight:normal;font-style:normal;color:#e08b3a;white-space:pre;letter-spacing:0.638px;line-height:normal;">- Forex</div>
<div style="position:absolute;left:51.70px;top:718.00px;font-family:'Liberation Sans',sans-serif;font-size:16px;font-weight:normal;font-style:normal;color:#222;white-space:pre;letter-spacing:0.976px;line-height:normal;">10/11 13:58</div>
<div style="position:absolute;left:167.20px;top:718.00px;font-family:'Liberation Sans',sans-serif;font-size:16px;font-weight:normal;font-style:normal;color:#222;white-space:pre;letter-spacing:0.346px;line-height:normal;">Conseil de banque :  Nous anticipons une hausse sur USD/JPY et EUR/USD - SocGen</div>
<div style="position:absolute;left:51.70px;top:746.00px;font-family:'Liberation Sans',sans-serif;font-size:16px;font-weight:normal;font-style:normal;color:#222;white-space:pre;letter-spacing:0.976px;line-height:normal;">10/11 13:54</div>
<div style="position:absolute;left:167.20px;top:746.00px;font-family:'Liberation Sans',sans-serif;font-size:16px;font-weight:normal;font-style:normal;color:#222;white-space:pre;letter-spacing:0.467px;line-height:normal;">Conseil de banque :  Voici nos anticipations pour EUR, JPY et GBP suite aux présidentielles US - Westpac</div>
<div style="position:absolute;left:51.70px;top:774.00px;font-family:'Liberation Sans',sans-serif;font-size:16px;font-weight:normal;font-style:normal;color:#222;white-space:pre;letter-spacing:0.976px;line-height:normal;">10/11 13:46</div>
<div style="position:absolute;left:167.20px;top:774.00px;font-family:'Liberation Sans',sans-serif;font-size:16px;font-weight:normal;font-style:normal;color:#222;white-space:pre;letter-spacing:0.414px;line-height:normal;">Conseil de banque :  Nous restons neutre sur EUR/USD mais avec un biais baissier - UOB</div>
<div style="position:absolute;left:51.70px;top:802.00px;font-family:'Liberation Sans',sans-serif;font-size:16px;font-weight:normal;font-style:normal;color:#222;white-space:pre;letter-spacing:0.976px;line-height:normal;">10/11 13:42</div>
<div style="position:absolute;left:167.20px;top:802.00px;font-family:'Liberation Sans',sans-serif;font-size:16px;font-weight:normal;font-style:normal;color:#222;white-space:pre;letter-spacing:0.495px;line-height:normal;">Conseil de banque :  Voici notre analyse technique et les seuils à surveiller sur EUR/USD - Société Générale</div>
<div style="position:absolute;left:51.70px;top:830.00px;font-family:'Liberation Sans',sans-serif;font-size:16px;font-weight:normal;font-style:normal;color:#222;white-space:pre;letter-spacing:0.976px;line-height:normal;">10/11 13:36</div>
<div style="position:absolute;left:167.20px;top:830.00px;font-family:'Liberation Sans',sans-serif;font-size:16px;font-weight:normal;font-style:normal;color:#222;white-space:pre;letter-spacing:0.521px;line-height:normal;">Conseil danque :  Notre stratégie favorite est l’  achat de USD/JPY et EUR/JPY - Morgan Stanley</div>
<div style="position:absolute;left:51.70px;top:858.00px;font-family:'Liberation Sans',sans-serif;font-size:16px;font-weight:normal;font-style:normal;color:#222;white-space:pre;letter-spacing:0.976px;line-height:normal;">10/11 13:28</div>
<div style="position:absolute;left:167.20px;top:858.00px;font-family:'Liberation Sans',sans-serif;font-size:16px;font-weight:normal;font-style:normal;color:#222;white-space:pre;letter-spacing:0.593px;line-height:normal;">Conseil de banque :  Nous estimons que USD/JPY pourrait monter à 110 avant de retomber à 100 - ANZ</div>
<div style="position:absolute;left:51.70px;top:886.00px;font-family:'Liberation Sans',sans-serif;font-size:16px;font-weight:normal;font-style:normal;color:#222;white-space:pre;letter-spacing:0.976px;line-height:normal;">10/11 13:28</div>
<div style="position:absolute;left:166.20px;top:886.00px;font-family:'Liberation Sans',sans-serif;font-size:16px;font-weight:normal;font-style:normal;color:#201dae;white-space:pre;letter-spacing:0.338px;line-height:normal;">USD/JPY, EUR/USD (SocGen) : Quelles directions pour ces deux paires ?</div>
<div style="position:absolute;left:723.50px;top:886.00px;font-family:'Liberation Sans',sans-serif;font-size:16px;font-weight:normal;font-style:normal;color:#e08b3a;white-space:pre;letter-spacing:0.588px;line-height:normal;">- Forex</div>
<div style="position:absolute;left:51.70px;top:914.00px;font-family:'Liberation Sans',sans-serif;font-size:16px;font-weight:normal;font-style:normal;color:#222;white-space:pre;letter-spacing:0.976px;line-height:normal;">10/11 13:25</div>
<div style="position:absolute;left:167.20px;top:914.00px;font-family:'Liberation Sans',sans-serif;font-size:16px;font-weight:normal;font-style:normal;color:#222;white-space:pre;letter-spacing:0.573px;line-height:normal;">Conseil de banque :  Nous sommes haussier sur le Dollar - Merrill Lynch</div>
<div style="position:absolute;left:51.70px;top:942.00px;font-family:'Liberation Sans',sans-serif;font-size:16px;font-weight:normal;font-style:normal;color:#222;white-space:pre;letter-spacing:0.976px;line-height:normal;">10/11 13:23</div>
<div style="position:absolute;left:167.20px;top:942.00px;font-family:'Liberation Sans',sans-serif;font-size:16px;font-weight:normal;font-style:normal;color:#222;white-space:pre;letter-spacing:0.54px;line-height:normal;">Conseil de banque :  Future haussier pour le dollar - Deutsche Bank</div>
<div style="position:absolute;left:51.70px;top:970.00px;font-family:'Liberation Sans',sans-serif;font-size:16px;font-weight:normal;font-style:normal;color:#222;white-space:pre;letter-spacing:0.976px;line-height:normal;">10/11 13:15</div>
<div style="position:absolute;left:166.20px;top:970.00px;font-family:'Liberation Sans',sans-serif;font-size:16px;font-weight:normal;font-style:normal;color:#222;white-space:pre;letter-spacing:0.48px;line-height:normal;">EUR/USD :  La paire vient de toucher de nouveau les 1.09, que ce passe-t-il ?</div>
<div style="position:absolute;left:51.70px;top:998.00px;font-family:'Liberation Sans',sans-serif;font-size:16px;font-weight:normal;font-style:normal;color:#222;white-space:pre;letter-spacing:0.976px;line-height:normal;">10/11 12:45</div>
<div style="position:absolute;left:166.20px;top:998.00px;font-family:'Liberation Sans',sans-serif;font-size:16px;font-weight:normal;font-style:normal;color:#222;white-space:pre;letter-spacing:0.609px;line-height:normal;">IPCH (mensuellement) Irlande :  -0.4% (octobre)</div>
<div style="position:absolute;left:51.70px;top:1026.00px;font-family:'Liberation Sans',sans-serif;font-size:16px;font-weight:normal;font-style:normal;color:#222;white-space:pre;letter-spacing:0.976px;line-height:normal;">10/11 12:45</div>
<div style="position:absolute;left:166.20px;top:1026.00px;font-family:'Liberation Sans',sans-serif;font-size:16px;font-weight:normal;font-style:normal;color:#222;white-space:pre;letter-spacing:0.65px;line-height:normal;">Indice des prix à la consommation (mensuellement) Irlande en baisse à -0.5% en octobre par rapport à -0.4% précédemment</div>
<div style="position:absolute;left:1681.70px;top:101.00px;font-family:'Liberation Sans',sans-serif;font-size:11.5px;font-weight:bold;font-style:normal;color:#111;white-space:pre;letter-spacing:0.163px;line-height:normal;">Notifications</div>
<div style="position:absolute;left:1834.70px;top:101.00px;font-family:'Liberation Sans',sans-serif;font-size:9px;font-weight:bold;font-style:normal;color:#eaffea;white-space:pre;letter-spacing:1.2px;line-height:normal;">ON</div>
<div style="position:absolute;left:1749.40px;top:132.00px;font-family:'Liberation Sans',sans-serif;font-size:12px;font-weight:normal;font-style:normal;color:#222;white-space:pre;letter-spacing:0.296px;line-height:normal;">Vue partagée</div>
<div style="position:absolute;left:1723.40px;top:162.00px;font-family:'Liberation Sans',sans-serif;font-size:12px;font-weight:normal;font-style:normal;color:#222;white-space:pre;letter-spacing:-0.646px;line-height:normal;">Evènements déclencheurs</div>
<div style="position:absolute;left:1757.90px;top:193.00px;font-family:'Liberation Sans',sans-serif;font-size:12px;font-weight:normal;font-style:normal;color:#222;white-space:pre;letter-spacing:-0.605px;line-height:normal;">Trading Key</div>
<div style="position:absolute;left:1702.90px;top:224.00px;font-family:'Liberation Sans',sans-serif;font-size:12px;font-weight:normal;font-style:normal;color:#222;white-space:pre;letter-spacing:-0.786px;line-height:normal;">Réglages</div>
<div style="position:absolute;left:1816.90px;top:224.00px;font-family:'Liberation Sans',sans-serif;font-size:12px;font-weight:normal;font-style:normal;color:#222;white-space:pre;letter-spacing:-0.497px;line-height:normal;">Barre d&#x27;outils</div>
<div style="position:absolute;left:1722.90px;top:256.00px;font-family:'Liberation Sans',sans-serif;font-size:12px;font-weight:normal;font-style:normal;color:#222;white-space:pre;letter-spacing:-0.621px;line-height:normal;">Plateforme Professionnelle</div>
<div style="position:absolute;left:1734.20px;top:305.00px;font-family:'Liberation Sans',sans-serif;font-size:25.5px;font-weight:bold;font-style:italic;color:#fff;white-space:pre;letter-spacing:0px;line-height:normal;">H</div>
<div style="position:absolute;left:1770.70px;top:304.50px;font-family:'Liberation Sans',sans-serif;font-size:25px;font-weight:bold;font-style:italic;color:#fff;white-space:pre;letter-spacing:-0.287px;line-height:normal;">trader</div>
<div style="position:absolute;left:1711.70px;top:348.00px;font-family:'Liberation Serif',serif;font-size:15.5px;font-weight:bold;font-style:normal;color:#fff;white-space:pre;letter-spacing:0.371px;line-height:normal;">Follow by Probability</div>
<div style="position:absolute;left:1720.70px;top:379.00px;font-family:'Liberation Serif',serif;font-size:12.5px;font-weight:normal;font-style:italic;color:#e8962e;white-space:pre;letter-spacing:0.044px;line-height:normal;">Learn from the world’s top</div>
<div style="position:absolute;left:1709.70px;top:392.00px;font-family:'Liberation Serif',serif;font-size:12.5px;font-weight:normal;font-style:italic;color:#e8962e;white-space:pre;letter-spacing:-0.126px;line-height:normal;">traders &amp; replicate their profits</div>
<div style="position:absolute;left:1749.70px;top:429.00px;font-family:'Liberation Sans',sans-serif;font-size:16px;font-weight:bold;font-style:normal;color:#fff;white-space:pre;letter-spacing:0.791px;line-height:normal;text-shadow:0 1px 1px rgba(0,0,0,.35)">Join Now</div>
<div style="position:absolute;left:1740.70px;top:472.00px;font-family:'Liberation Serif',serif;font-size:23px;font-weight:normal;font-style:normal;color:#1f5ca8;white-space:pre;letter-spacing:1.296px;line-height:normal;-webkit-text-stroke:0.55px #1f5ca8">TradeQQ</div>
<div style="position:absolute;left:1706.70px;top:501.00px;font-family:'Liberation Serif',serif;font-size:18.5px;font-weight:normal;font-style:normal;color:#1f5ca8;white-space:pre;letter-spacing:0.976px;line-height:normal;-webkit-text-stroke:0.5px #1f5ca8">Produits et services</div>
<div style="position:absolute;left:1697.70px;top:561.00px;font-family:'Liberation Serif',serif;font-size:20px;font-weight:normal;font-style:normal;color:#2aa6de;white-space:pre;letter-spacing:0.471px;line-height:normal;">TradeQQ</div>
<div style="position:absolute;left:1814.70px;top:561.00px;font-family:'Liberation Serif',serif;font-size:20px;font-weight:normal;font-style:normal;color:#2aa6de;white-space:pre;letter-spacing:0.732px;line-height:normal;">Twitter</div>
<div style="position:absolute;left:1670.70px;top:597.00px;font-family:'Liberation Serif',serif;font-size:18.5px;font-weight:normal;font-style:normal;color:#1f5ca8;white-space:pre;letter-spacing:-0.831px;line-height:normal;-webkit-text-stroke:0.45px #1f5ca8">Téléchargez l&#x27;application TradeQQ</div>
<div style="position:absolute;left:1708.40px;top:627.00px;font-family:'Liberation Sans',sans-serif;font-size:13px;font-weight:bold;font-style:normal;color:#fff;white-space:pre;letter-spacing:-0.035px;line-height:normal;">iphone</div>
<div style="position:absolute;left:1820.90px;top:628.00px;font-family:'Liberation Sans',sans-serif;font-size:13px;font-weight:bold;font-style:normal;color:#fff;white-space:pre;letter-spacing:-0.114px;line-height:normal;">Android</div>
<div style="position:absolute;left:1676.70px;top:657.00px;font-family:'Liberation Serif',serif;font-size:12px;font-weight:bold;font-style:normal;color:#fff;white-space:pre;letter-spacing:0.708px;line-height:normal;">IT:</div>
<div style="position:absolute;left:1737.70px;top:657.00px;font-family:'Liberation Serif',serif;font-size:12px;font-weight:bold;font-style:normal;color:#fff;white-space:pre;letter-spacing:0.319px;line-height:normal;">Publicité:</div>
<div style="position:absolute;left:1708.00px;top:659.00px;font-family:'Liberation Sans',sans-serif;font-size:16px;font-weight:bold;font-style:normal;color:#fff;white-space:pre;letter-spacing:0px;line-height:normal;">S</div>
<div style="position:absolute;left:1804.00px;top:659.00px;font-family:'Liberation Sans',sans-serif;font-size:16px;font-weight:bold;font-style:normal;color:#fff;white-space:pre;letter-spacing:0px;line-height:normal;">S</div>
<div style="position:absolute;left:1724.70px;top:683.00px;font-family:'Liberation Serif',serif;font-size:12px;font-weight:bold;font-style:normal;color:#fff;white-space:pre;letter-spacing:-0.075px;line-height:normal;">news.tradeqq.com</div>
<div style="position:absolute;left:1917px;top:44px;width:1px;height:1003px;background:#8ea3bd;"></div>
<div style="position:absolute;left:1915px;top:84px;width:2px;height:963px;background:#e9f6fd;"></div>
<div style="position:absolute;left:1918px;top:1040px;width:1px;height:7px;background:#000;"></div>
<div style="position:absolute;left:0;top:1041px;width:1657px;height:6px;background:#fff"></div></body></html>
